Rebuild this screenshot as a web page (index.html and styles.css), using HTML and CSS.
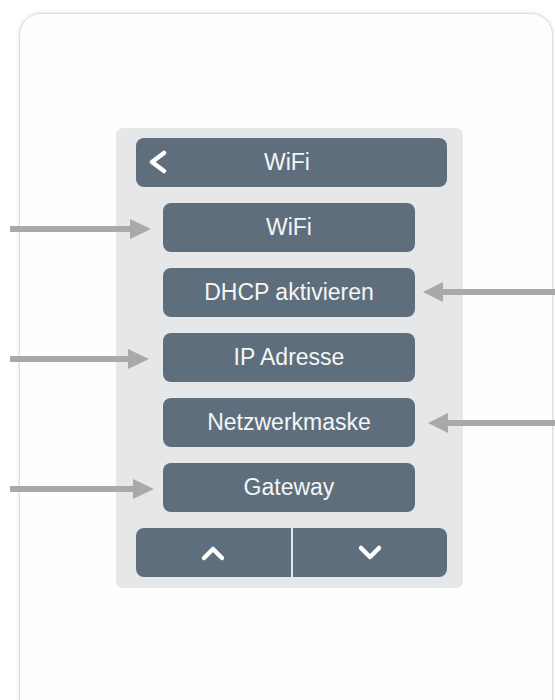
FILE: index.html
```html
<!DOCTYPE html>
<html lang="de">
<head>
    <meta charset="utf-8">
    <title>WiFi</title>
    <link rel="stylesheet" href="styles.css">
</head>
<body>
<div class="card">
    <div class="panel">
        <div class="btn head">
            <svg class="back" width="20" height="24" viewBox="0 0 20 24">
                <polyline points="16,3 4,12 16,21" fill="none" stroke="#fff" stroke-width="4.5" stroke-linecap="round" stroke-linejoin="round"/>
            </svg>
            <span>WiFi</span>
        </div>
        <div class="btn item">WiFi</div>
        <div class="btn item">DHCP aktivieren</div>
        <div class="btn item">IP Adresse</div>
        <div class="btn item">Netzwerkmaske</div>
        <div class="btn item">Gateway</div>
        <div class="nav">
            <div class="btn nav-btn">
                <svg width="26" height="18" viewBox="0 0 26 18">
                    <polyline points="4,14 13,5 22,14" fill="none" stroke="#fff" stroke-width="4.5" stroke-linecap="round" stroke-linejoin="round"/>
                </svg>
            </div>
            <div class="btn nav-btn">
                <svg width="26" height="18" viewBox="0 0 26 18">
                    <polyline points="4,4 13,13 22,4" fill="none" stroke="#fff" stroke-width="4.5" stroke-linecap="round" stroke-linejoin="round"/>
                </svg>
            </div>
        </div>
    </div>
</div>
<!-- annotation arrows over the screen -->
<svg class="arrows" width="555" height="700" viewBox="0 0 555 700">
    <g fill="#a9a9a9">
        <rect x="10" y="226" width="122" height="6"/>
        <polygon points="130,219 151,229 130,239"/>
        <rect x="10" y="356" width="120" height="6"/>
        <polygon points="128,349 149,359 128,369"/>
        <rect x="10" y="486" width="125" height="6"/>
        <polygon points="133,479 154,489 133,499"/>
        <rect x="441" y="289" width="114" height="6"/>
        <polygon points="443,282 423,292 443,302"/>
        <rect x="446" y="420" width="109" height="6"/>
        <polygon points="448,413 428,423 448,433"/>
    </g>
</svg>
</body>
</html>
```

FILE: styles.css
```css
* {
    margin: 0;
    padding: 0;
    box-sizing: border-box;
}
html, body {
    height: 100%;
    overflow: hidden;
}
body {
    background: #fff;
    font-family: "Liberation Sans", Arial, sans-serif;
}
.card {
    margin: 13px 2px 0 19px;
    height: 720px;
    border: 1px solid #dedede;
    border-radius: 22px;
    background: #fefefe;
    box-shadow: 0 0 4px rgba(0, 0, 0, 0.12);
    padding: 114px 0 0 96px;
}
.panel {
    width: 347px;
    height: 460px;
    background: #e6e7e9;
    border-radius: 7px;
    padding: 10px 16px 11px 20px;
    display: flex;
    flex-direction: column;
    gap: 16px;
}
.btn {
    height: 49px;
    background: #5f6e7c;
    border-radius: 8px;
    color: #f4f5f6;
    font-size: 23px;
    display: flex;
    align-items: center;
    justify-content: center;
}
.head {
    position: relative;
}
.head span {
    margin-left: -9px;
}
.back {
    position: absolute;
    left: 12px;
    top: 12px;
}
.item {
    margin: 0 32px 0 27px;
}
.nav {
    display: flex;
    gap: 2px;
}
.nav-btn {
    flex: 1;
    border-radius: 0;
}
.nav-btn:first-child {
    border-radius: 8px 0 0 8px;
}
.nav-btn:last-child {
    border-radius: 0 8px 8px 0;
}
.arrows {
    position: absolute;
    left: 0;
    top: 0;
}
```
